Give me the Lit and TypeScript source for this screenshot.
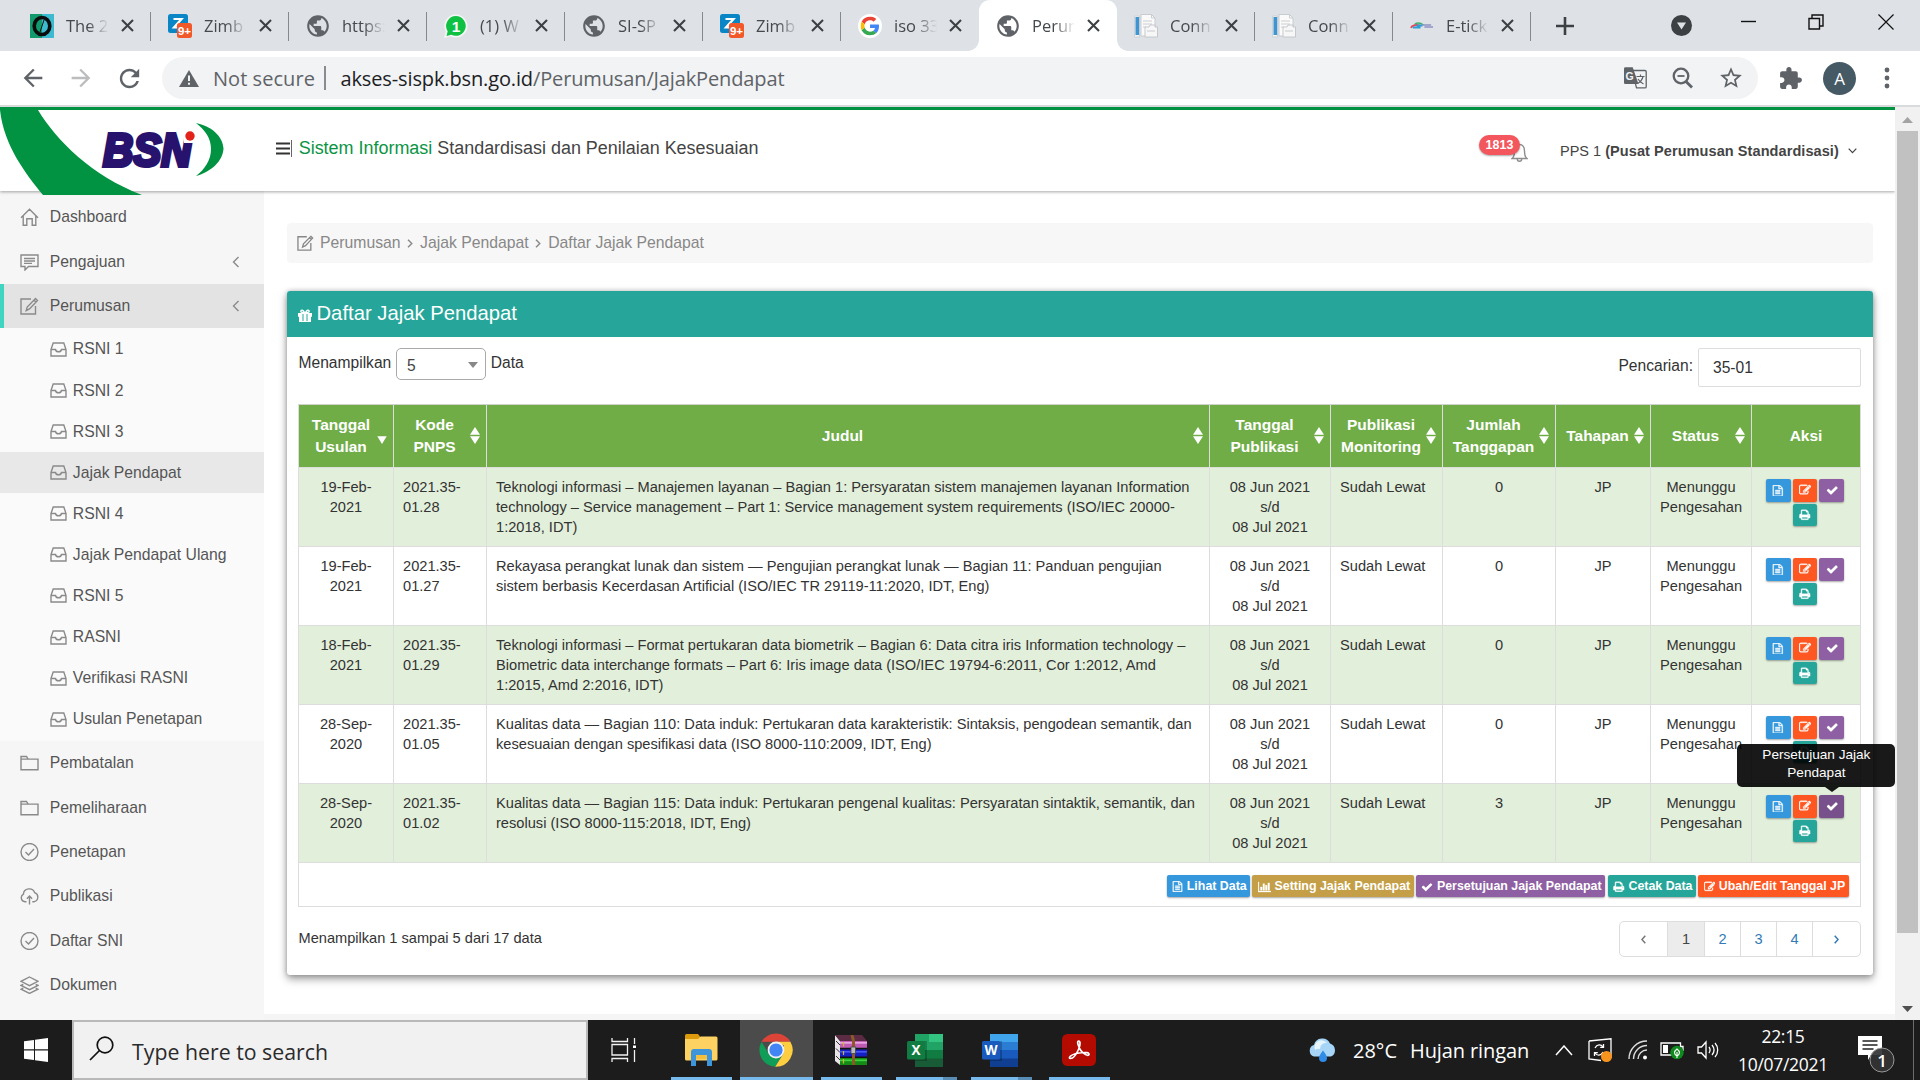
import { LitElement, html, svg, css, nothing, TemplateResult } from "lit";
import { customElement } from "lit/decorators.js";
import { classMap } from "lit/directives/class-map.js";

/* ---------- icons ---------- */
const line = (w: number, h: number, body: TemplateResult, vb = `0 0 ${w} ${h}`, sw = 1.4) =>
  html`<svg width=${w} height=${h} viewBox=${vb} fill="none" stroke="currentColor" stroke-width=${sw}>${body}</svg>`;
const solid = (w: number, h: number, vb: string, d: string, sw = 0) =>
  html`<svg width=${w} height=${h} viewBox=${vb} fill="currentColor" stroke="currentColor" stroke-width=${sw}><path d=${d} /></svg>`;

const FA = {
  check: "M1671 566q0 40-28 68l-724 724-136 136q-28 28-68 28t-68-28l-136-136-362-362q-28-28-28-68t28-68l136-136q28-28 68-28t68 28l294 295 656-657q28-28 68-28t68 28l136 136q28 28 28 68z",
  print: "M448 1536h896v-256h-896v256zm0-640h896v-384h-160q-40 0-68-28t-28-68v-160h-640v640zm1152 64q0-26-19-45t-45-19-45 19-19 45 19 45 45 19 45-19 19-45zm128 0v416q0 13-9.500 22.500t-22.500 9.500h-224v160q0 40-28 68t-68 28h-960q-40 0-68-28t-28-68v-160h-224q-13 0-22.500-9.500t-9.500-22.500v-416q0-79 56.500-135.500t135.500-56.500h64v-544q0-40 28-68t68-28h672q40 0 88 20t76 48l152 152q28 28 48 76t20 88v256h64q79 0 135.500 56.500t56.500 135.500z",
  edit: "M888 1184l116-116-152-152-116 116v56h96v96h56zm440-720q-16-16-33 1l-350 350q-17 17-1 33t33-1l350-350q17-17 1-33zm80 594v190q0 119-84.500 203.500t-203.500 84.500h-832q-119 0-203.500-84.500t-84.500-203.500v-832q0-119 84.500-203.500t203.500-84.500h832q63 0 117 25 15 7 18 23 3 17-9 29l-49 49q-14 14-32 8-23-6-45-6h-832q-66 0-113 47t-47 113v832q0 66 47 113t113 47h832q66 0 113-47t47-113v-126q0-13 9-22l64-64q15-15 35-7t20 29zm-96-738l288 288-672 672h-288v-288zm444 132l-92 92-288-288 92-92q28-28 68-28t68 28l152 152q28 28 28 68t-28 68z",
  file: "M1596 380q28 28 48 76t20 88v1152q0 40-28 68t-68 28h-1344q-40 0-68-28t-28-68v-1600q0-40 28-68t68-28h896q40 0 88 20t76 48zm-444-244v376h376q-10-29-22-41l-313-313q-12-12-41-22zm384 1528v-1024h-416q-40 0-68-28t-28-68v-416h-768v1536h1280zm-1024-864q0-14 9-23t23-9h704q14 0 23 9t9 23v64q0 14-9 23t-23 9h-704q-14 0-23-9t-9-23v-64zm736 224q14 0 23 9t9 23v64q0 14-9 23t-23 9h-704q-14 0-23-9t-9-23v-64q0-14 9-23t23-9h704zm0 256q14 0 23 9t9 23v64q0 14-9 23t-23 9h-704q-14 0-23-9t-9-23v-64q0-14 9-23t23-9h704z",
  chart: "M640 896v512h-256v-512h256zm384-512v1024h-256v-1024h256zm1024 1152v128h-2048v-1536h128v1408h1920zm-640-896v768h-256v-768h256zm384-384v1152h-256v-1152h256z",
};
const fa = (k: keyof typeof FA, s = 13) => solid(k === "chart" ? s * 1.1 : s, s, k === "chart" ? "0 0 2048 1792" : "0 0 1792 1792", FA[k], k === "check" ? 0 : 55);

const MD = {
  globe: "M12 2C6.48 2 2 6.48 2 12s4.48 10 10 10 10-4.480 10-10S17.520 2 12 2zm-1 17.930c-3.950-.490-7-3.850-7-7.930 0-.620.080-1.210.210-1.790L9 15v1c0 1.100.900 2 2 2v1.930zm6.900-2.540c-.260-.810-1-1.390-1.900-1.390h-1v-3c0-.550-.450-1-1-1H8v-2h2c.550 0 1-.450 1-1V7h2c1.100 0 2-.900 2-2v-.410c2.930 1.190 5 4.060 5 7.410 0 2.080-.800 3.970-2.100 5.390z",
  back: "M20 11H7.830l5.590-5.590L12 4l-8 8 8 8 1.410-1.410L7.830 13H20v-2z",
  forward: "M12 4l-1.410 1.410L16.170 11H4v2h12.170l-5.580 5.590L12 20l8-8z",
  reload: "M17.650 6.350C16.200 4.900 14.210 4 12 4c-4.420 0-7.990 3.580-7.990 8s3.570 8 7.990 8c3.730 0 6.840-2.550 7.730-6h-2.080c-.820 2.330-3.040 4-5.650 4-3.310 0-6-2.690-6-6s2.690-6 6-6c1.660 0 3.140.690 4.220 1.780L13 11h7V4l-2.350 2.350z",
  puzzle: "M20.500 11H19V7c0-1.100-.900-2-2-2h-4V3.500C13 2.120 11.880 1 10.500 1S8 2.120 8 3.500V5H4c-1.100 0-1.990.900-1.990 2v3.800H3.500c1.490 0 2.700 1.210 2.700 2.700s-1.210 2.700-2.700 2.700H2V20c0 1.100.900 2 2 2h3.800v-1.500c0-1.490 1.210-2.700 2.700-2.700 1.490 0 2.700 1.210 2.700 2.700V22H17c1.100 0 2-.900 2-2v-4h1.500c1.380 0 2.500-1.120 2.500-2.500S21.880 11 20.500 11z",
  star: "M22 9.240l-7.190-.620L12 2 9.190 8.630 2 9.240l5.460 4.730L5.820 21 12 17.270 18.180 21l-1.630-7.030L22 9.240zM12 15.400l-3.760 2.270 1-4.280-3.320-2.880 4.380-.380L12 6.100l1.710 4.040 4.380.380-3.320 2.880 1 4.280L12 15.400z",
};
const md = (k: keyof typeof MD, s: number) => solid(s, s, "0 0 24 24", MD[k]);

const side: Record<string, TemplateResult> = {
  home: svg`<path d="M1 9.800 9.500 1.200 18 9.800M3.200 8v9.300h3.600v-6.500h5.400v6.500h3.600V8" />`,
  bubble: svg`<path d="M1 2h17v11.500H8.500L5 17v-3.500H1zM4 5.500h11M4 8h11M4 10.400h8" />`,
  note: svg`<path d="M11 2H1v15h14.500V9M15.500 1.500l2 2-8 8.500-3.300 1.600 1-3.600zM14 3l2 2" />`,
  folder: svg`<path d="M1 15.700V2.500h5.500l1.600 2.600H18v10.600zM1 5.100h8" />`,
  check: svg`<circle cx="9.500" cy="9" r="8.500" /><path d="m5.500 9 3 3 5.500-6" />`,
  cloud: svg`<path d="M6.500 14.700H5A4 4 0 0 1 3.400 7.200 5.800 5.800 0 0 1 14.600 5.600a4.700 4.700 0 0 1-.8 9.100h-1.500M9.500 17.500V9.200M6.900 11.700l2.600-2.600 2.600 2.600" />`,
  layers: svg`<path d="M9.500 1 18 5.300 9.500 9.600 1 5.300zM3.300 8.300 1 9.400l8.500 4.200L18 9.400l-2.300-1.100M3.300 12.100 1 13.200l8.500 4.200 8.500-4.200-2.300-1.100" />`,
  drawer: svg`<path d="M1 7.500 3.200 1h10.600L16 7.500V14H1zM1 7.500h4.500c.3 1.500 1.400 2.300 3 2.300s2.700-.8 3-2.300H16" />`,
};
const sideIcon = (k: string) => (k === "drawer" ? line(17, 15, side[k]) : line(19, 18, side[k]));

const chevLeft = () => line(8, 12, svg`<path d="M6.500 1 1.500 6l5 5" />`);
const closeX = () => line(13, 13, svg`<path d="m1 1 11 11M12 1 1 12" />`, "0 0 13 13", 2.1);

const fav: Record<string, () => TemplateResult> = {
  globe: () => html`<span class="gl">${md("globe", 26)}</span>`,
  book: () => html`<svg width="24" height="24" viewBox="0 0 24 24"><path fill="#129a6c" d="M0 0h12v24H0z" /><path fill="#3bbad0" d="M12 0h12v24H12z" /><ellipse cx="12" cy="12" rx="7.800" ry="8.500" fill="none" stroke="#0c0c0c" stroke-width="3.600" /><path d="m14 6-4 12" stroke="#111" stroke-width="1" /></svg>`,
  zimbra: () => html`<svg width="24" height="24" viewBox="0 0 24 24"><rect width="20" height="19" rx="2.500" fill="#0a86c7" /><path d="M5.500 5h8l-7.500 8.500h4" fill="none" stroke="#fff" stroke-width="2.200" /><rect x="9" y="9" width="15" height="15" rx="2.500" fill="#f2592a" /><text x="16.500" y="21.300" text-anchor="middle" font-family="Liberation Sans" font-weight="700" font-size="11.500" fill="#fff">9+</text></svg>`,
  wa: () => html`<svg width="24" height="24" viewBox="0 0 24 24"><path d="M12 .5a11.500 11.500 0 1 1-5.300 21.700L0 24l1.700-6.500A11.500 11.500 0 0 1 12 .5z" fill="#f5f7f6" /><path d="M12 2a9.900 9.900 0 1 1-4.700 18.700L2.500 22l1.200-4.800A9.900 9.900 0 0 1 12 2z" fill="#0fc143" /><text x="12" y="17.500" text-anchor="middle" font-family="Liberation Sans" font-weight="700" font-size="15.500" fill="#fff">1</text></svg>`,
  google: () => html`<svg width="24" height="24" viewBox="0 0 24 24"><circle cx="12" cy="12" r="12" fill="#fff" /><svg x="2.600" y="2.600" width="18.800" height="18.800" viewBox="0 0 48 48"><path fill="#EA4335" d="M24 9.500c3.540 0 6.710 1.220 9.210 3.600l6.850-6.850C35.900 2.380 30.470 0 24 0 14.620 0 6.510 5.380 2.560 13.220l7.980 6.190C12.430 13.720 17.740 9.500 24 9.500z" /><path fill="#4285F4" d="M46.980 24.550c0-1.570-.15-3.090-.38-4.550H24v9.020h12.940c-.58 2.960-2.260 5.480-4.780 7.180l7.730 6c4.510-4.180 7.090-10.360 7.090-17.650z" /><path fill="#FBBC05" d="M10.530 28.590c-.48-1.450-.76-2.990-.76-4.590s.27-3.140.76-4.590l-7.980-6.190C.92 16.460 0 20.120 0 24s.92 7.540 2.560 10.780l7.970-6.190z" /><path fill="#34A853" d="M24 48c6.480 0 11.930-2.130 15.890-5.810l-7.730-6c-2.150 1.450-4.920 2.300-8.160 2.300-6.260 0-11.570-4.220-13.470-9.910l-7.980 6.190C6.510 42.620 14.620 48 24 48z" /></svg></svg>`,
  doc: () => html`<svg width="24" height="24" viewBox="0 0 24 24"><path fill="#f1f3f5" stroke="#c9cdd1" stroke-width=".8" d="M.5 2h5v21h-5z" /><path fill="#3e95d2" d="M1.500 3h3.600v18H1.500z" /><path fill="#fafafa" stroke="#c4c8cc" stroke-width=".9" d="M7 .5h10.500l3.500 3.500v18H7z" /><path fill="none" stroke="#c4c8cc" stroke-width=".9" d="M17.500.5V4H21M9 7h9M9 10h9M9 13h3" /><path fill="#f7f7f7" stroke="#bfc3c7" stroke-width=".9" d="M11 13h4l1-2h5v2h2.500v10H11zM13 17h8" /></svg>`,
  ticket: () => html`<svg width="25" height="24" viewBox="0 0 25 24"><path d="M1 14c1-3 6-3.500 9-2.500" fill="none" stroke="#e4495d" stroke-width="2" /><path d="M5 10c3-2 6-1.500 9 1" fill="none" stroke="#3eb06f" stroke-width="1.500" /><path d="M3 13.500h8M7 11.500h6" stroke="#2b9fd8" stroke-width="2" /><path d="M13 11h9M15 13h9" stroke="#8e93c4" stroke-width="1.600" /></svg>`,
};

const TABS: [string, string][] = [
  ["book", "The 2"], ["zimbra", "Zimb"], ["globe", "https:"], ["wa", "(1) W"], ["globe", "SI-SP"], ["zimbra", "Zimb"],
  ["google", "iso 33"], ["globe", "Perum"], ["doc", "Conn"], ["doc", "Conn"], ["ticket", "E-tick"],
];

@customElement("browser-bar")
class BrowserBar extends LitElement {
  static styles = css`
    :host { display: block; height: 107px; font-family: "Open Sans", "Noto Sans", sans-serif; background: #fff; }
    svg { display: block; }
    .strip { display: flex; height: 51px; background: #dee1e6; padding-left: 13px; box-sizing: border-box; }
    .tab { position: relative; flex: none; display: flex; align-items: center; box-sizing: border-box; width: 138px; padding-left: 17px; color: #45494d; }
    .tab.sep::after { content: ""; position: absolute; right: 0; top: 12px; width: 1.500px; height: 29px; background: #85888c; }
    .tab.on { background: #fff; border-radius: 11px 11px 0 0; }
    .tab.on::before, .tab.on::after { content: ""; position: absolute; bottom: 0; width: 11px; height: 11px; }
    .tab.on::before { left: -11px; background: radial-gradient(circle at 0 0, #dee1e6 10.500px, #fff 11px); }
    .tab.on::after { right: -11px; background: radial-gradient(circle at 100% 0, #dee1e6 10.500px, #fff 11px); }
    .fav { flex: none; width: 24px; display: flex; justify-content: center; }
    .gl { color: #5f6368; }
    .lbl { flex: none; margin-left: 12px; width: 43px; overflow: hidden; white-space: nowrap; font-size: 16.500px; line-height: 24px; -webkit-mask-image: linear-gradient(90deg, #000 50%, transparent 100%); mask-image: linear-gradient(90deg, #000 50%, transparent 100%); }
    .x { margin-left: 12px; color: #3c4043; }
    .plus { flex: none; width: 68px; display: flex; align-items: center; justify-content: center; color: #3c4043; }
    .win { flex: 1; display: grid; grid-template-columns: 116px 66px 70px 69px; padding-bottom: 8px; box-sizing: border-box; align-items: center; }
    .win > span { display: flex; justify-content: center; }
    .win > .down { padding: 8px 0 0 49px; }
    .bar { display: flex; align-items: center; height: 54px; color: #5f6368; box-sizing: border-box; }
    .nav { display: flex; width: 162px; box-sizing: border-box; padding-left: 19px; gap: 20px; }
    .off { color: #babcbe; }
    .omni { display: flex; align-items: center; width: 1596px; height: 42px; border-radius: 21px; background: #f1f3f4; box-sizing: border-box; padding: 0 14px 0 17px; font-size: 20px; }
    .warn { width: 34px; }
    .ns { letter-spacing: .05px; width: 111px; }
    .div { width: 1.500px; height: 24px; background: #888b8f; margin-right: 15px; }
    .url { flex: 1; letter-spacing: -.13px; white-space: nowrap; }
    .url b { color: #202124; font-weight: 400; }
    .acts { display: flex; gap: 22px; align-items: center; }
    .right { flex: 1; display: flex; align-items: center; padding-left: 20px; }
    .av { width: 33px; height: 33px; border-radius: 50%; background: #455a64; color: #fff; display: flex; align-items: center; justify-content: center; font-size: 17px; margin: 0 28px 0 20px; }
    .hair { height: 2px; background: #d9dadc; }
  `;
  render() {
    return html`
      <div class="strip">
        ${TABS.map(([f, t], i) => html`<div class=${classMap({ tab: true, on: i === 7, sep: i !== 6 && i !== 7 })}>
          <span class="fav">${fav[f]()}</span><span class="lbl">${t}</span><span class="x">${closeX()}</span></div>`)}
        <div class="plus">${line(18, 18, svg`<path d="M9 0v18M0 9h18" />`, "0 0 18 18", 2.6)}</div>
        <div class="win">
          <span class="down"><svg width="21" height="21" viewBox="0 0 21 21"><circle cx="10.500" cy="10.500" r="10.500" fill="#3c4043" /><path d="M6 7.500h9l-4.500 7z" fill="#dee1e6" /></svg></span>
          <span><svg width="15" height="15"><path d="M0 7.500h15" stroke="#111" stroke-width="1.400" /></svg></span>
          <span>${line(16, 16, svg`<path d="M1 4.500h10.500V15H1zM4 4.500V1h11v11h-3.500" stroke="#111" />`)}</span>
          <span>${line(16, 16, svg`<path d="m.5.5 15 15m0-15-15 15" stroke="#111" stroke-width="1.200" />`)}</span>
        </div>
      </div>
      <div class="bar">
        <div class="nav">${md("back", 28)}<span class="off">${md("forward", 28)}</span>${md("reload", 29)}</div>
        <div class="omni">
          <span class="warn"><svg width="20" height="17" viewBox="0 0 20 17"><path d="M10 0 20 17H0z" fill="#5f6368" /><path d="M10 5.500v5.500M10 12.700v2" stroke="#f1f3f4" stroke-width="2" /></svg></span>
          <span class="ns">Not secure</span><span class="div"></span>
          <span class="url"><b>akses-sispk.bsn.go.id</b>/Perumusan/JajakPendapat</span>
          <span class="acts">
            <svg width="23" height="22" viewBox="0 0 23 22"><path d="M8 3.500h13q1.200 0 1.200 1.200v15q0 1.200-1.200 1.200h-8.500L8 3.500z" fill="#f1f3f4" stroke="#5f6368" stroke-width="1.300" /><path d="M1.300.3h7.400L14.500 17H1.300Q0 17 0 15.700V1.600Q0 .3 1.300.3z" fill="#5f6368" /><text x="1.500" y="12.500" font-family="Liberation Sans" font-weight="700" font-size="10.500" fill="#f1f3f4">G</text><path d="M12.500 9.500h8M16.500 7.500v2M19 9.500c-.8 3.500-3.500 6-5.500 7M14 12c1.500 2.500 3.500 4 5.500 5" fill="none" stroke="#5f6368" stroke-width="1.200" /></svg>
            <svg width="27" height="27" viewBox="0 0 27 27" fill="none" stroke="#5f6368" stroke-width="2.300"><circle cx="12" cy="11" r="7.300" /><path d="m17 16.500 6 6" stroke-width="2.800" /><path d="M8.500 11h7" stroke-width="1.800" /></svg>
            ${md("star", 26)}
          </span>
        </div>
        <div class="right">${md("puzzle", 25)}<span class="av">A</span>
          <svg width="6" height="22" viewBox="0 0 6 22" fill="currentColor"><circle cx="3" cy="3" r="2.400" /><circle cx="3" cy="11" r="2.400" /><circle cx="3" cy="19" r="2.400" /></svg></div>
      </div>
      <div class="hair"></div>`;
  }
}

/* ---------- page header ---------- */
@customElement("site-header")
class SiteHeader extends LitElement {
  static styles = css`
    :host { display: flex; position: relative; z-index: 2; height: 84px; box-sizing: border-box; border-top: 3px solid #019341; background: #fff; box-shadow: 0 1px 3px rgba(0, 0, 0, .35); align-items: center; color: #444; }
    .logo { width: 276px; height: 81px; overflow: visible; display: block; flex: none; }
    .title { display: flex; align-items: center; font-size: 17.950px; color: #444; padding-bottom: 5px; white-space: nowrap; flex: 1; }
    .title svg { margin-right: 1px; }
    .title i { font-style: normal; color: #0b9444; margin: 0 5px 0 6.500px; }
    .pipe { width: 1.200px; height: 17px; background: #666; }
    .bell { position: relative; width: 49px; height: 26px; margin-right: 32px; }
    .bell svg { position: absolute; left: 32px; top: 5px; color: #8d8d8d; }
    .num { position: absolute; z-index: 1; left: 0; top: -2.500px; width: 41px; height: 20px; border-radius: 10px; background: #f3565d; color: #fff; font-weight: 700; font-size: 12.500px; line-height: 20px; text-align: center; box-shadow: 0 1px 2px rgba(0, 0, 0, .35); }
    .user { font-size: 14.500px; width: 288px; white-space: nowrap; }
    .user b { letter-spacing: .08px; }
    .who { width: 335px; display: flex; align-items: center; }
  `;
  render() {
    return html`
      <svg class="logo" viewBox="0 0 276 81">
        <path fill="#019341" d="M0 0h38C56 30 92 66 142 85H43C26 64 4 36 0 0z" />
        <text x="103" y="55.500" textLength="88.500" lengthAdjust="spacingAndGlyphs" font-family="Liberation Sans" font-weight="700" font-style="italic" font-size="47" fill="#27126d" stroke="#27126d" stroke-width="4" stroke-linejoin="miter">BSN</text>
        <path d="M183.500 17H198v16h-14z" fill="#fff" />
        <circle cx="190" cy="26" r="4.700" fill="#e2231a" />
        <path fill="#019341" d="M196 13c15 3 27 13 27.500 25.500C223 51 211 62 196 66c9-7 15-16 15-27s-6-19-15-26z" />
      </svg>
      <div class="title"><svg width="14" height="13"><path d="M0 1.500h14M0 6.500h14M0 11.500h14" stroke="#333" stroke-width="2" /></svg><span class="pipe"></span><i>Sistem Informasi</i> Standardisasi dan Penilaian Kesesuaian</div>
      <div class="bell"><span class="num">1813</span>
        ${line(17, 19, svg`<path d="M1 15.500h15c-2-1.500-2.500-3-2.500-7.500 0-4-2-6.500-5-6.500S3.500 4 3.500 8 3 14 1 15.500zM6.300 16c0 3 4.400 3 4.400 0" />`)}</div>
      <div class="who"><span class="user">PPS 1 <b>(Pusat Perumusan Standardisasi)</b></span>${line(9, 6, svg`<path d="m.7.7 3.800 4 3.800-4" />`, "0 0 9 6", 1.2)}</div>`;
  }
}

/* ---------- sidebar ---------- */
const SUB = ["RSNI 1", "RSNI 2", "RSNI 3", "Jajak Pendapat", "RSNI 4", "Jajak Pendapat Ulang", "RSNI 5", "RASNI", "Verifikasi RASNI", "Usulan Penetapan"];

@customElement("side-menu")
class SideMenu extends LitElement {
  static styles = css`
    :host { display: block; width: 264px; background: #f6f6f6; color: #555; font-size: 15.720px; padding-top: 4px; box-sizing: border-box; }
    svg { display: block; color: #8a8a8a; }
    .it { display: flex; align-items: center; height: 44.450px; padding: 0 24px 0 20px; box-sizing: border-box; }
    .it span { flex: 1; padding-left: 10.800px; }
    .it.open { background: #e3e3e3; border-left: 4px solid #3fd5c0; padding-left: 16px; height: 44px; }
    .subs { background: #fafafa; height: 413px; box-sizing: border-box; padding-top: 1px; }
    .sub { display: flex; align-items: center; gap: 5.800px; height: 41.100px; box-sizing: border-box; padding: 0 0 0 50px; }
    .sub.on { background: #e8e8e8; }
  `;
  item(icon: string, label: string, more = false, open = false) {
    return html`<div class=${classMap({ it: true, open })}>${sideIcon(icon)}<span>${label}</span>${more ? chevLeft() : nothing}</div>`;
  }
  render() {
    return html`
      ${this.item("home", "Dashboard")}${this.item("bubble", "Pengajuan", true)}${this.item("note", "Perumusan", true, true)}
      <div class="subs">${SUB.map((s) => html`<div class=${classMap({ sub: true, on: s === "Jajak Pendapat" })}>${sideIcon("drawer")}${s}</div>`)}</div>
      ${this.item("folder", "Pembatalan")}${this.item("folder", "Pemeliharaan")}${this.item("check", "Penetapan")}
      ${this.item("cloud", "Publikasi")}${this.item("check", "Daftar SNI")}${this.item("layers", "Dokumen")}`;
  }
}

/* ---------- table card ---------- */
const HEAD: [string[], string][] = [
  [["Tanggal", "Usulan"], "desc"], [["Kode", "PNPS"], "both"], [["Judul"], "both"], [["Tanggal", "Publikasi"], "both"],
  [["Publikasi", "Monitoring"], "both"], [["Jumlah", "Tanggapan"], "both"], [["Tahapan"], "both"], [["Status"], "both"], [["Aksi"], ""],
];
const ROWS: { d: string[]; k: string; j: string[]; n: string }[] = [
  { d: ["19-Feb-", "2021"], k: "28", n: "0", j: ["Teknologi informasi – Manajemen layanan – Bagian 1: Persyaratan sistem manajemen layanan Information", "technology – Service management – Part 1: Service management system requirements (ISO/IEC 20000-", "1:2018, IDT)"] },
  { d: ["19-Feb-", "2021"], k: "27", n: "0", j: ["Rekayasa perangkat lunak dan sistem — Pengujian perangkat lunak — Bagian 11: Panduan pengujian", "sistem berbasis Kecerdasan Artificial (ISO/IEC TR 29119-11:2020, IDT, Eng)"] },
  { d: ["18-Feb-", "2021"], k: "29", n: "0", j: ["Teknologi informasi – Format pertukaran data biometrik – Bagian 6: Data citra iris Information technology –", "Biometric data interchange formats – Part 6: Iris image data (ISO/IEC 19794-6:2011, Cor 1:2012, Amd", "1:2015, Amd 2:2016, IDT)"] },
  { d: ["28-Sep-", "2020"], k: "05", n: "0", j: ["Kualitas data — Bagian 110: Data induk: Pertukaran data karakteristik: Sintaksis, pengodean semantik, dan", "kesesuaian dengan spesifikasi data (ISO 8000-110:2009, IDT, Eng)"] },
  { d: ["28-Sep-", "2020"], k: "02", n: "3", j: ["Kualitas data — Bagian 115: Data induk: Pertukaran pengenal kualitas: Persyaratan sintaktik, semantik, dan", "resolusi (ISO 8000-115:2018, IDT, Eng)"] },
];
const lines = (a: string[]) => a.map((t) => html`<div>${t}</div>`);

@customElement("poll-card")
class PollCard extends LitElement {
  static styles = css`
    :host { display: block; height: 684px; background: #fff; border-radius: 3px; box-shadow: 0 4px 8px rgba(0, 0, 0, .38), 0 0 5px rgba(0, 0, 0, .22); color: #333; font-size: 15.600px; }
    svg { display: block; }
    .cap { display: flex; align-items: center; gap: 4.500px; height: 46px; box-sizing: border-box; padding: 0 0 2px 11px; background: #26a69a; color: #fff; font-size: 20.250px; border-radius: 3px 3px 0 0; }
    .cap svg { margin-top: 5px; }
    .tools { display: flex; justify-content: space-between; height: 67px; box-sizing: border-box; padding: 11px 12px 0 11.500px; }
    .len { display: flex; height: 32px; line-height: 29px; gap: 4.800px; }
    .sel { width: 90px; height: 32px; box-sizing: border-box; border: 1px solid #aaa; border-radius: 5px; display: flex; justify-content: space-between; align-items: center; padding: 2px 7px 0 10px; color: #444; }
    .find { display: flex; gap: 5px; line-height: 35px; }
    .inp { width: 163px; height: 39px; box-sizing: border-box; border: 1px solid #ddd; border-radius: 2px; padding-left: 14px; line-height: 37px; }
    .grid { margin: 0 12px 0 11px; border: 1px solid #ddd; border-top-color: #cfd3cc; font-size: 14.640px; line-height: 19.800px; }
    .row { display: grid; grid-template-columns: 94px 93px 723px 121px 112px 113px 95px 101px 1fr; }
    .row > div { border-left: 1px solid #ddd; padding: 10px 9px 0; text-align: center; box-sizing: border-box; white-space: nowrap; }
    .row > div:first-child { border-left: 0; }
    .row > .l { text-align: left; }
    .body { height: 79px; border-top: 1px solid #ddd; box-sizing: border-box; background: #fff; }
    .body.alt { background: #e2efda; }
    .row.head { height: 62px; background: #70ad47; color: #fff; font-weight: 700; font-size: 15.500px; line-height: 22px; }
    .head > div { position: relative; display: flex; flex-direction: column; justify-content: center; padding: 0 11px 1px 0; }
    .head > div:last-child { padding: 0 0 1px; }
    .head > div:first-child { padding-right: 10px; }
    .sort { position: absolute; right: 6px; top: 22px; }
    .row > .act { display: flex; flex-wrap: wrap; align-content: flex-start; justify-content: center; gap: 2px; padding: 11px 15px 0 13px; }
    .b { width: 24.800px; height: 22.600px; border-radius: 2px; display: flex; align-items: center; justify-content: center; color: #fff; box-shadow: 0 1px 2px rgba(0, 0, 0, .35); position: relative; }
    .blue { background: #3598dc; } .org { background: #ff5722; } .pur { background: #8e5fa2; } .teal { background: #26a69a; } .gold { background: #c49f47; }
    .pur.hot { background: #78508c; }
    .tip { position: absolute; z-index: 5; left: -82px; top: -51px; width: 158px; height: 43px; box-sizing: border-box; padding: 2px 0 0; border-radius: 5px; background: rgba(0, 0, 0, .9); color: #fff; font-size: 13.600px; line-height: 18px; text-align: center; }
    .tip::after { content: ""; position: absolute; left: 88px; top: 43px; border: 7px solid transparent; border-top: 5px solid rgba(0, 0, 0, .9); border-bottom: 0; }
    .legend { display: flex; justify-content: flex-end; gap: 2px; height: 44px; border-top: 1px solid #ddd; box-sizing: border-box; padding: 12px 11px 0 0; }
    .lg { display: flex; align-items: center; justify-content: center; gap: 3.500px; height: 22px; box-sizing: border-box; padding: 1px 0 0 2px; border-radius: 2px; color: #fff; font-weight: 700; font-size: 12.400px; white-space: nowrap; box-shadow: 0 1px 2px rgba(0, 0, 0, .35); }
    .w1 { width: 83px; } .w2 { width: 162px; } .w3 { width: 189px; margin-right: 1px; } .w4 { width: 88px; } .w5 { width: 151px; }
    .foot { display: flex; justify-content: space-between; padding: 14px 12px 0 11.500px; font-size: 14.600px; line-height: 35px; }
    .pg { display: grid; grid-template-columns: 47px 37px 36px 36px 36px 1fr; width: 242px; height: 36px; box-sizing: border-box; border: 1px solid #ddd; border-radius: 5px; color: #337ab7; overflow: hidden; }
    .pg > span { border-left: 1px solid #ddd; display: flex; align-items: center; justify-content: center; }
    .pg > span:first-child { border-left: 0; color: #777; }
    .pg > .cur { background: #ececec; color: #444; }
  `;
  sort(kind: string) {
    return kind === "both"
      ? html`<svg class="sort" width="10" height="17" viewBox="0 0 10 17" fill="#fff"><path d="m5 0 5 7.800H0zM5 17l5-7.800H0z" /></svg>`
      : kind === "desc" ? html`<svg class="sort" width="10" height="17" viewBox="0 0 10 17" fill="#fff"><path d="M5 17l4.700-7.800H.3z" /></svg>` : nothing;
  }
  render() {
    return html`
      <div class="cap"><svg width="14" height="13" viewBox="0 0 14 13" fill="#fff"><path d="M0 4h14v3.800h-1V13H1V7.800H0z" /><path d="M6.500 3.500C5.500.8 3 .4 2.800 2.200c0 1.300 1.800 1.300 3.700 1.300zm1 0c1-2.700 3.500-3.100 3.700-1.300 0 1.300-1.800 1.300-3.700 1.300z" fill="none" stroke="#fff" stroke-width="1.300" /><path d="M5 5v7M9 5v7" stroke="#26a69a" stroke-width="1" /></svg>Daftar Jajak Pendapat</div>
      <div class="tools">
        <div class="len"><span>Menampilkan</span><span class="sel">5<svg width="10" height="6"><path d="M0 0h10L5 6z" fill="#888" /></svg></span><span>Data</span></div>
        <div class="find"><span>Pencarian:</span><span class="inp">35-01</span></div>
      </div>
      <div class="grid">
        <div class="row head">${HEAD.map(([t, s]) => html`<div>${lines(t)}${this.sort(s)}</div>`)}</div>
        ${ROWS.map((r, i) => html`<div class=${classMap({ row: true, body: true, alt: i % 2 === 0 })}>
          <div>${lines(r.d)}</div><div class="l">${lines(["2021.35-", "01." + r.k])}</div><div class="l">${lines(r.j)}</div>
          <div>${lines(["08 Jun 2021", "s/d", "08 Jul 2021"])}</div><div class="l">Sudah Lewat</div><div>${r.n}</div><div>JP</div>
          <div>${lines(["Menunggu", "Pengesahan"])}</div>
          <div class="act"><span class="b blue">${fa("file", 11.5)}</span><span class="b org">${fa("edit", 12)}</span>
            <span class=${classMap({ b: true, pur: true, hot: i === 4 })}>${fa("check", 12.5)}${i === 4 ? html`<span class="tip">Persetujuan Jajak<br />Pendapat</span>` : nothing}</span>
            <span class="b teal">${fa("print", 11.5)}</span></div>
        </div>`)}
        <div class="legend">
          <span class="lg blue w1">${fa("file", 11)}Lihat Data</span><span class="lg gold w2">${fa("chart", 12)}Setting Jajak Pendapat</span>
          <span class="lg pur w3">${fa("check", 12)}Persetujuan Jajak Pendapat</span><span class="lg teal w4">${fa("print", 11.5)}Cetak Data</span>
          <span class="lg org w5">${fa("edit", 11.5)}Ubah/Edit Tanggal JP</span>
        </div>
      </div>
      <div class="foot"><span>Menampilkan 1 sampai 5 dari 17 data</span>
        <div class="pg"><span>${line(5, 9, svg`<path d="M4.300.7.9 4.500l3.400 3.800" />`, "0 0 5 9", 1.5)}</span><span class="cur">1</span><span>2</span><span>3</span><span>4</span><span>${line(5, 9, svg`<path d="m.7.7 3.400 3.800L.7 8.300" />`, "0 0 5 9", 1.5)}</span></div></div>`;
  }
}

/* ---------- taskbar ---------- */
@customElement("task-bar")
class TaskBar extends LitElement {
  static styles = css`
    :host { display: flex; height: 60px; background: #1c1c1c; color: #fff; font-family: "Open Sans", "Noto Sans", sans-serif; }
    svg { display: block; }
    .start { width: 72px; display: flex; align-items: center; justify-content: center; }
    .search { width: 516px; height: 60px; box-sizing: border-box; border: 2px solid #b9b9b9; background: #f1f1f1; color: #2b2b2b; display: flex; align-items: center; font-size: 21.300px; padding: 0 0 0 15px; gap: 18px; }
    .search span { padding-top: 3px; }
    .search svg { margin-bottom: 3px; }
    .tv { width: 83px; display: flex; align-items: center; padding-left: 23px; box-sizing: border-box; }
    .app { position: relative; height: 60px; display: flex; align-items: center; justify-content: center; box-sizing: border-box; border-bottom: 3px solid #76b9ed; padding: 3px 1px 0 0; }
    .app.two::after { content: ""; position: absolute; right: 0; bottom: -3px; width: 14px; height: 3px; background: #5a8db6; }
    .act { background: #4b4b4b; width: 73px; margin: 0 8px; }
    .n { width: 61px; } .m { margin-right: 14px; } .p { margin-left: 3px; }
    .app.two { padding-right: 3px; }
    .fill { flex: 1; }
    .tray { display: flex; align-items: center; width: 613px; font-size: 20px; white-space: nowrap; }
    .deg { width: 57px; margin-left: 15px; padding-top: 1px; } .txt { width: 145px; letter-spacing: -.1px; padding-top: 1px; }
    .up { width: 33px; } .sync { width: 40px; } .wifi { width: 32px; } .bat { width: 37px; } .vol { width: 40px; }
    .clock { width: 92px; font-size: 17.500px; line-height: 28px; text-align: center; letter-spacing: -.3px; }
    .note { flex: 1; display: flex; padding-left: 29px; }
    .note svg { margin-top: 9px; }
    .edge { width: 1.500px; height: 60px; background: #6d6d6d; margin-right: 6px; }
  `;
  office(c: string[], box: string, ch: string) {
    return html`<svg width="36" height="33" viewBox="0 0 36 33">
      <rect x="8" y="0" width="14" height="8.500" fill=${c[0]} /><rect x="22" y="0" width="14" height="8.500" fill=${c[1]} />
      <rect x="8" y="8" width="14" height="8.500" fill=${c[2]} /><rect x="22" y="8" width="14" height="8.500" fill=${c[3]} />
      <rect x="8" y="16" width="14" height="9" fill=${c[4]} /><rect x="22" y="16" width="14" height="9" fill=${c[5]} />
      <rect x="8" y="24.500" width="28" height="8.500" fill=${c[6]} /><rect x="8" y="7" width="12" height="20" fill="#000" opacity=".22" />
      <rect x="0" y="7" width="18" height="18.500" rx="1.500" fill=${box} />
      <text x="9" y="21" text-anchor="middle" font-family="Open Sans" font-weight="700" font-size="13.500" fill="#fff">${ch}</text></svg>`;
  }
  render() {
    return html`
      <div class="start"><svg width="24" height="24" viewBox="0 0 24 24" fill="#fff"><path d="M0 3.300 10 1.900v9.400H0zM11 1.700 24 0v11.300H11zM0 12.500h10v9.500L0 20.700zM11 12.500h13V24l-13-1.800z" /></svg></div>
      <div class="search"><svg width="25" height="25" viewBox="0 0 25 25" fill="none" stroke="#111" stroke-width="1.700"><circle cx="16" cy="9" r="7.800" /><path d="M10.500 14.500 1 24" /></svg><span>Type here to search</span></div>
      <div class="tv"><svg width="26" height="24" viewBox="0 0 26 24" fill="none" stroke="#f2f2f2" stroke-width="1.300"><path d="M1 6.500h15.500v10.500H1zM1 0v3.500h15.500V0M1 24v-3.500h15.500V24M23.500 0v6M23.500 12v12" /><path d="M22 7.500h3V10h-3z" fill="#fff" stroke="none" /></svg></div>
      <div class="app n"><svg width="33" height="32" viewBox="0 0 33 32"><path d="M0 1.500Q0 0 1.500 0H13l2 2.500v5H0z" fill="#dd9a0b" /><path d="M0 5h13l2.500-2.500H31Q32.500 2.500 32.500 4v21q0 1.500-1.500 1.500H1.500Q0 26.500 0 25z" fill="#fdd263" /><path d="M6 32V18q0-3 3-3h15q3 0 3 3v14h-5v-7H11v7z" fill="#3e95d9" /><path d="M11 21h11v4H11z" fill="#f3bf3d" /></svg></div>
      <div class="app act"><svg width="34" height="34" viewBox="0 0 34 34"><path fill="#db4437" d="M2.600 8.700A16.700 16.700 0 0 1 31.400 8.700H17z" /><path fill="#0f9d58" d="M2.600 8.700A16.700 16.700 0 0 0 16.200 33.700L24 21 17 25l-7.200-4z" /><path fill="#ffcd40" d="M31.400 8.700A16.700 16.700 0 0 1 16.200 33.700L24.200 21 25 12.500 17 8.700z" /><circle cx="17" cy="17" r="8.400" fill="#f1f1f1" /><circle cx="17" cy="17" r="6.600" fill="#4285f4" /></svg></div>
      <div class="app n m"><svg width="33" height="31" viewBox="0 0 33 31"><path d="M0 0 5 6v24l-5-4z" fill="#e8e4e8" /><path d="M0 0h27l5 6H5z" fill="#5b2b44" /><path d="M5 6h27v7H5z" fill="#c05bb5" /><path d="M5 7h27v1.700H5z" fill="#e9a5e2" /><path d="M5 12.800h27v1.700H5zM5 21h27v2H5z" fill="#111" /><path d="M5 14.500h27v7H5z" fill="#1420c4" /><path d="M5 16h27v1.600H5z" fill="#4a57f5" /><path d="M5 23h27v7H5z" fill="#148b14" /><path d="M5 24.500h27v1.700H5z" fill="#3fd23f" /><path d="M1 6l4 4M1 13.500l4 4M1 21l4 4" stroke="#333" /><path d="M17 0l1.500 6v24" fill="none" stroke="#8c5a28" stroke-width="3" /><rect x="16" y="12" width="4.500" height="6.500" fill="#bbb" stroke="#444" stroke-width=".8" /><path d="M8.500 7v4.500M8.500 16v4M8.500 24v4.500" stroke="#c8b72e" stroke-width="1.200" /></svg></div>
      <div class="app n m two">${this.office(["#21a366", "#33c481", "#21a366", "#21a366", "#107c41", "#107c41", "#185c37"], "#107c41", "X")}</div>
      <div class="app n m two">${this.office(["#41a5ee", "#41a5ee", "#2b7cd3", "#2b7cd3", "#185abd", "#185abd", "#103f91"], "#185abd", "W")}</div>
      <div class="app n p"><svg width="34" height="32" viewBox="0 0 34 32"><rect width="34" height="32" rx="5.500" fill="#b30b00" /><path d="M16.500 7c2.500 0 1.500 5 0 8.500-1.800 4-5 9-8 9-2.500 0-1-4 8.500-5.500 7-1 10.500-.5 10 1.500-.5 2.200-6-.5-8.500-4.500C16.500 13 14.500 7 16.500 7z" fill="none" stroke="#fff" stroke-width="1.700" /></svg></div>
      <div class="fill"></div>
      <div class="tray">
        <svg width="31" height="24" viewBox="0 0 31 24"><path d="M7 18.500a6 6 0 0 1 0-11.500 8.500 8.500 0 0 1 16-1.500A7 7 0 0 1 24 18.500z" fill="#a6d5f7" /><path d="M8 12a7 7 0 0 1 12-7 6 6 0 0 0-7 6 6 6 0 0 0-5 1z" fill="#e6f4fe" /><path d="M16 12.500c2 3 4 5 4 7.500a4 4 0 0 1-8 0c0-2.500 2-4.500 4-7.500z" fill="#2f8be6" /></svg>
        <span class="deg">28°C</span><span class="txt">Hujan ringan</span>
        <span class="up">${line(18, 11, svg`<path d="m1 10 8-9 8 9" />`, "0 0 18 11", 1.5)}</span>
        <span class="sync"><svg width="25" height="25" viewBox="0 0 25 25" fill="none" stroke="#fff" stroke-width="1.300"><path d="M1 3 23 .8V20M1 3v18l12 1.500M7 10c2-4 6-4 8-1M15.500 6v3.300h-3.300M15 14c-2 4-6 4-8 1M6.500 18v-3.300h3.300" /><circle cx="18.500" cy="18.500" r="5.500" fill="#f7941d" stroke="none" /></svg></span>
        <span class="wifi"><svg width="20" height="20" viewBox="0 0 20 20" fill="none" stroke="#ddd" stroke-width="1.400"><path d="M1 19A18 18 0 0 1 19 1M5.500 19A13.500 13.500 0 0 1 19 5.500M10 19a9 9 0 0 1 9-9" /><circle cx="17" cy="17.500" r="2" fill="#fff" stroke="none" /></svg></span>
        <span class="bat"><svg width="25" height="20" viewBox="0 0 25 20"><path d="M1 3h19.500v12H1zM21 6.500h2V11" fill="none" stroke="#fff" stroke-width="1.300" /><path d="M3 5h5v8H3z" fill="#fff" /><circle cx="17" cy="12.500" r="6.700" fill="#0f8a1c" /><path d="M17 9c-3.300 2.500-3.300 5 0 7 3.300-2 3.300-4.500 0-7zM17 12v6" stroke="#fff" fill="none" stroke-width="1.100" /></svg></span>
        <span class="vol"><svg width="23" height="20" viewBox="0 0 23 20" fill="none" stroke="#fff" stroke-width="1.300"><path d="M1 7h3.500L9 2v16l-4.500-5H1zM12 7c1.300 1.800 1.300 4.200 0 6M15 5c2.500 3 2.500 7 0 10M18 3c3.600 4 3.600 10 0 14" /></svg></span>
        <div class="clock">22:15<br />10/07/2021</div>
        <div class="note"><svg width="38" height="40" viewBox="0 0 38 40"><path d="M0 1h24v19H13l-3 5v-5H0z" fill="#fff" /><path d="M4.500 6h15M4.500 10h15M4.500 14h11" stroke="#222" stroke-width="1.300" /><circle cx="24" cy="25" r="12" fill="#333" fill-opacity=".92" stroke="#999" stroke-width="1" /><text x="24" y="31.500" text-anchor="middle" font-family="Open Sans" font-weight="600" font-size="17" fill="#fff">1</text></svg></div>
        <span class="edge"></span>
      </div>`;
  }
}

@customElement("app-root")
class AppRoot extends LitElement {
  static styles = css`
    :host { display: flex; flex-direction: column; width: 1920px; height: 1080px; overflow: hidden; background: #fff; font-family: "Liberation Sans", Arial, sans-serif; }
    .view { display: flex; height: 913px; }
    .page { width: 1895px; background: #f5f5f5; height: 913px; overflow: hidden; }
    .cols { display: flex; height: 829px; }
    main { flex: 1; height: 823px; background: #fff; box-sizing: border-box; padding: 32px 22px 0 23px; }
    .crumb { display: flex; align-items: center; height: 40px; margin-bottom: 28px; padding: 0 11px 0 10px; box-sizing: border-box; background: #f7f7f7; border-radius: 4px; color: #888; font-size: 15.750px; }
    .crumb svg { display: block; }
    .crumb span { margin-left: 6px; }
    .crumb .gt { margin: 0 1px 0 6.500px; }
    .scroll { width: 25px; height: 913px; background: #f1f1f1; display: flex; flex-direction: column; align-items: center; box-sizing: border-box; padding: 10px 0 8px; }
    .thumb { width: 21px; height: 802px; background: #c1c1c1; margin: 8px 0 auto; }
  `;
  render() {
    const gt = html`<span class="gt">${line(6, 9, svg`<path d="m1 .7 3.800 3.800L1 8.300" />`, "0 0 6 9", 1.4)}</span>`;
    return html`
      <browser-bar></browser-bar>
      <div class="view">
        <div class="page">
          <site-header></site-header>
          <div class="cols">
            <side-menu></side-menu>
            <main>
              <div class="crumb">${line(17, 16, side.note, "0 0 19 18", 1.5)}<span>Perumusan</span>${gt}<span>Jajak Pendapat</span>${gt}<span>Daftar Jajak Pendapat</span></div>
              <poll-card></poll-card>
            </main>
          </div>
        </div>
        <div class="scroll">
          <svg width="11" height="6"><path d="M5.500 0 11 6H0z" fill="#a3a3a3" /></svg>
          <div class="thumb"></div>
          <svg width="11" height="6"><path d="M0 0h11L5.500 6z" fill="#505050" /></svg>
        </div>
      </div>
      <task-bar></task-bar>`;
  }
}
